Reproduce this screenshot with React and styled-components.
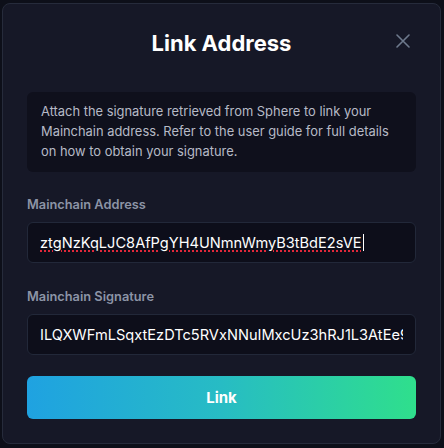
import React from 'react'
import styled, { createGlobalStyle } from 'styled-components'

const GlobalStyle = createGlobalStyle`
  html, body {
    margin: 0;
    padding: 0;
    background: #0d0f19;
    font-family: Inter, "Open Sans", sans-serif;
  }
  * {
    box-sizing: border-box;
  }
`

const Page = styled.div`
  width: 444px;
  height: 448px;
  padding: 3px 3px 4px 2px;
`

const Modal = styled.div`
  width: 439px;
  height: 441px;
  background: #161827;
  border: 1px solid #262b3b;
  border-radius: 8px;
  padding: 0 24px 24px;
  display: flex;
  flex-direction: column;
`

const Header = styled.header`
  display: grid;
  grid-template-columns: 1fr auto 1fr;
  align-items: center;
  padding-top: 27px;
  margin-bottom: 37px;
`

const Title = styled.h2`
  grid-column: 2;
  margin: 0;
  font-size: 22px;
  line-height: 24px;
  font-weight: 700;
  color: #ffffff;
`

const CloseButton = styled.button`
  justify-self: end;
  width: 24px;
  height: 24px;
  margin-right: 1px;
  margin-top: -4px;
  padding: 0;
  border: none;
  background: transparent;
  display: flex;
  align-items: center;
  justify-content: center;
  cursor: pointer;
`

const InfoBox = styled.div`
  background: #0f101c;
  border-radius: 6px;
  padding: 10px 14px;
  font-size: 12.9px;
  line-height: 20px;
  color: #b6bac6;
`

const Label = styled.label`
  display: block;
  margin-top: ${p => p.$top}px;
  margin-bottom: 9px;
  font-size: 12.8px;
  line-height: 16px;
  font-weight: 600;
  color: #8c94a6;
`

const FieldBox = styled.div`
  height: 41px;
  background: #0d0e1a;
  border: 1px solid #222839;
  border-radius: 6px;
  padding: 0 12px;
  display: flex;
  align-items: center;
  overflow: hidden;
`

const FieldText = styled.span`
  font-size: 14.6px;
  color: #ffffff;
  white-space: nowrap;
  text-decoration: underline dotted #e0283a;
  text-decoration-thickness: 2px;
  text-underline-offset: 3px;
`

const Caret = styled.span`
  display: inline-block;
  width: 1px;
  height: 17px;
  background: #ffffff;
  margin-left: 1px;
`

const Input = styled.input`
  width: 100%;
  height: 41px;
  background: #0d0e1a;
  border: 1px solid #222839;
  border-radius: 6px;
  padding: 0 12px;
  font-family: Inter, sans-serif;
  font-size: 14.6px;
  color: #ffffff;
  outline: none;
`

const LinkButton = styled.button`
  margin-top: 21px;
  height: 43px;
  width: 100%;
  border: none;
  border-radius: 6px;
  background: linear-gradient(90deg, #1fa2e1 0%, #27bcc4 50%, #2fdf8c 100%);
  font-family: Inter, sans-serif;
  font-size: 15px;
  font-weight: 700;
  color: #ffffff;
  cursor: pointer;
`

const CloseIcon = () => (
  <svg width="14" height="14" viewBox="0 0 14 14" fill="none">
    <path d="M1 1L13 13M13 1L1 13" stroke="#6e7a8d" strokeWidth="1.6" strokeLinecap="round" />
  </svg>
)

export default function App() {
  return (
    <Page>
      <GlobalStyle />
      <Modal>
        <Header>
          <Title>Link Address</Title>
          <CloseButton aria-label="Close">
            <CloseIcon />
          </CloseButton>
        </Header>
        <InfoBox>
          Attach the signature retrieved from Sphere to link your Mainchain address. Refer to the
          user guide for full details on how to obtain your signature.
        </InfoBox>
        <Label $top={25}>Mainchain Address</Label>
        <FieldBox>
          <FieldText>ztgNzKqLJC8AfPgYH4UNmnWmyB3tBdE2sVE</FieldText>
          <Caret />
        </FieldBox>
        <Label $top={26}>Mainchain Signature</Label>
        <Input readOnly value="ILQXWFmLSqxtEzDTc5RVxNNuIMxcUz3hRJ1L3AtEe9dKx2" />
        <LinkButton>Link</LinkButton>
      </Modal>
    </Page>
  )
}
